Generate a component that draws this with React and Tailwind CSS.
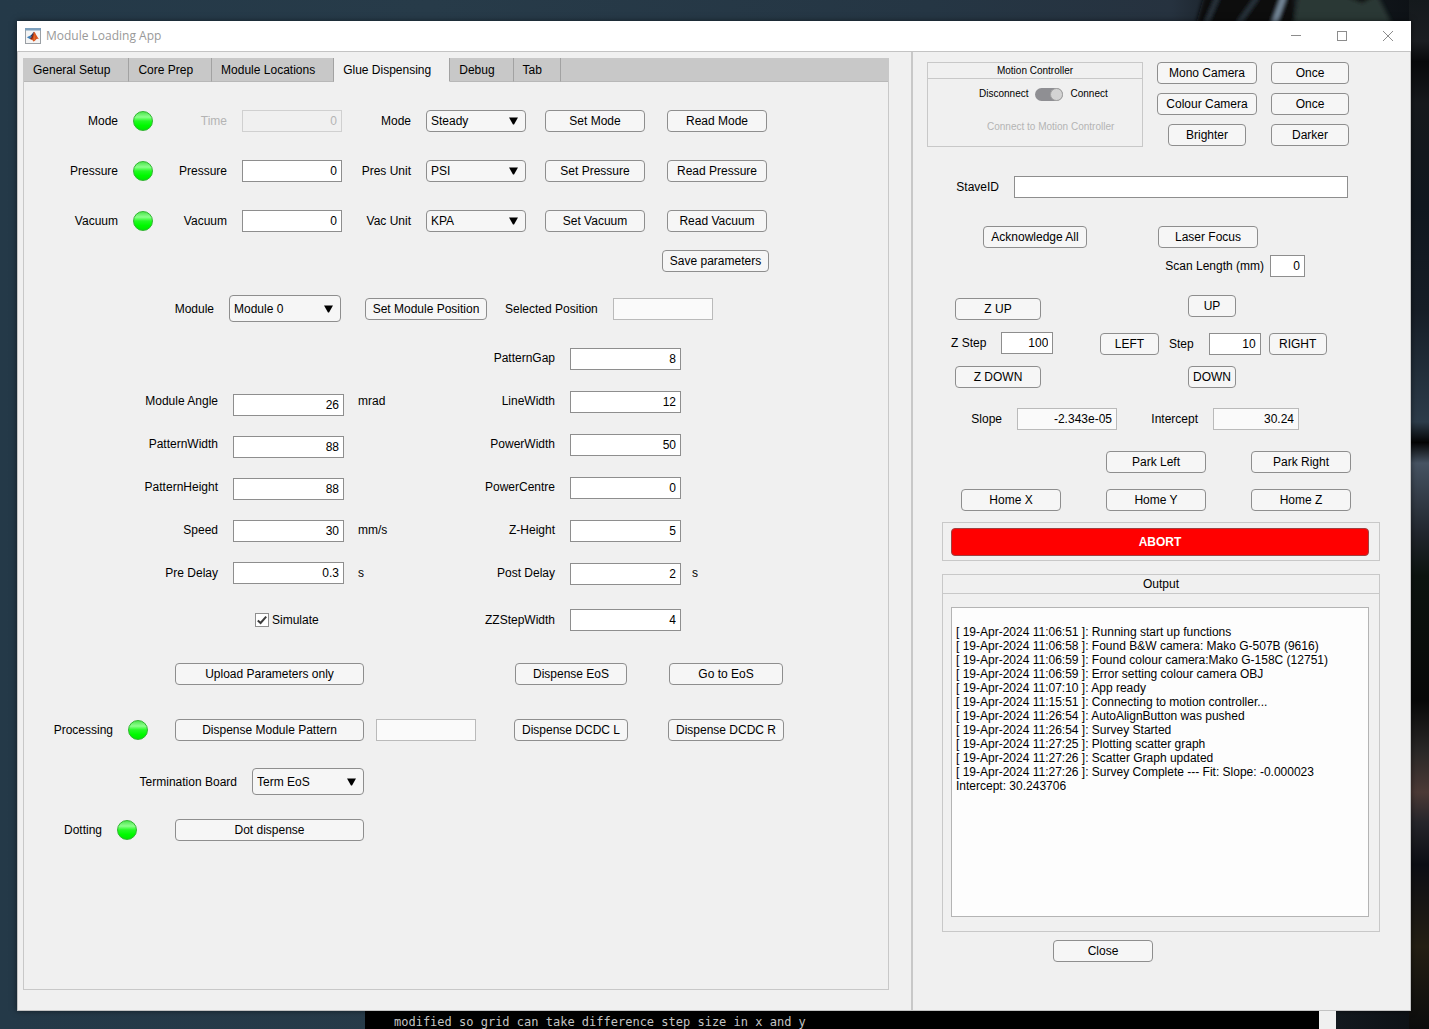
import { useId, useState } from "react";

const tabs = [
  "General Setup",
  "Core Prep",
  "Module Locations",
  "Glue Dispensing",
  "Debug",
  "Tab",
];

const dispenserRows = [
  {
    name: "Mode",
    field: { label: "Time", disabled: true },
    unit: { label: "Mode", options: ["Steady", "Timed"] },
  },
  {
    name: "Pressure",
    field: { label: "Pressure" },
    unit: { label: "Pres Unit", options: ["PSI", "BAR", "KPA"] },
  },
  {
    name: "Vacuum",
    field: { label: "Vacuum" },
    unit: { label: "Vac Unit", options: ["KPA", "PSI", "BAR"] },
  },
];

const patternFields = [
  { id: "angle", label: "Module Angle", value: "26", unit: "mrad" },
  { id: "width", label: "PatternWidth", value: "88" },
  { id: "height", label: "PatternHeight", value: "88" },
  { id: "speed", label: "Speed", value: "30", unit: "mm/s" },
  { id: "pre-delay", label: "Pre Delay", value: "0.3", unit: "s" },
];

const lineFields = [
  { id: "gap", label: "PatternGap", value: "8" },
  { id: "line-width", label: "LineWidth", value: "12" },
  { id: "power-width", label: "PowerWidth", value: "50" },
  { id: "power-centre", label: "PowerCentre", value: "0" },
  { id: "z-height", label: "Z-Height", value: "5" },
  { id: "post-delay", label: "Post Delay", value: "2", unit: "s" },
];

const log = `
[ 19-Apr-2024 11:06:51 ]: Running start up functions
[ 19-Apr-2024 11:06:58 ]: Found B&W camera: Mako G-507B (9616)
[ 19-Apr-2024 11:06:59 ]: Found colour camera:Mako G-158C (12751)
[ 19-Apr-2024 11:06:59 ]: Error setting colour camera OBJ
[ 19-Apr-2024 11:07:10 ]: App ready
[ 19-Apr-2024 11:15:51 ]: Connecting to motion controller...
[ 19-Apr-2024 11:26:54 ]: AutoAlignButton was pushed
[ 19-Apr-2024 11:26:54 ]: Survey Started
[ 19-Apr-2024 11:27:25 ]: Plotting scatter graph
[ 19-Apr-2024 11:27:26 ]: Scatter Graph updated
[ 19-Apr-2024 11:27:26 ]: Survey Complete --- Fit: Slope: -0.000023
Intercept: 30.243706`;

const Button = ({ className = "w-[100px]", children }) => (
  <button
    type="button"
    className={`h-[22px] shrink-0 rounded border border-[#8e8e8e] bg-[#f6f6f6] text-center leading-5 whitespace-nowrap hover:bg-white ${className}`}
  >
    {children}
  </button>
);

const Field = ({ className = "w-[100px]", readOnly, ...props }) => (
  <input
    type="text"
    readOnly={readOnly}
    className={`h-[22px] shrink-0 border px-1 text-right disabled:border-[#d0d0d0] disabled:bg-transparent disabled:text-[#b4b4b4] ${
      readOnly ? "border-[#bababa] bg-[#fafafa]" : "border-[#8e8e8e] bg-white"
    } ${className}`}
    {...props}
  />
);

const Select = ({ id, options, className = "h-[22px] w-[100px]" }) => (
  <span className={`relative block shrink-0 ${className}`}>
    <select
      id={id}
      className="size-full appearance-none rounded border border-[#8e8e8e] bg-[#f6f6f6] pl-1"
    >
      {options.map((option) => (
        <option key={option}>{option}</option>
      ))}
    </select>
    <svg
      viewBox="0 0 9 8"
      className="absolute inset-y-0 right-2 my-auto h-2 w-[9px] pointer-events-none"
    >
      <path d="M0 .5h9L5 7.500H4z" fill="#000" />
    </svg>
  </span>
);

const Led = () => (
  <span className="block rounded-full border size-5 shrink-0 border-[#2fb52f] bg-[linear-gradient(#4fe64f,#8dff8d_28%,#22fb22_50%,#00fa00_75%,#00e800)]" />
);

const DispenserRow = ({ name, field, unit }) => {
  const id = useId();
  return (
    <>
      <span className="text-right">{name}</span>
      <Led />
      <label
        htmlFor={`${id}-value`}
        className={`text-right ${field.disabled ? "text-[#b4b4b4]" : ""}`}
      >
        {field.label}
      </label>
      <Field id={`${id}-value`} defaultValue="0" disabled={field.disabled} />
      <label htmlFor={`${id}-unit`} className="text-right whitespace-nowrap">
        {unit.label}
      </label>
      <Select id={`${id}-unit`} options={unit.options} />
      <Button className="w-[100px] justify-self-end">Set {name}</Button>
      <Button className="w-[100px] justify-self-end">Read {name}</Button>
    </>
  );
};

// Labels and units run on a slightly wider pitch than the boxes between them.
const FieldColumns = ({ fields, labelWidth, pitch, unitGap, className }) => (
  <div className={`flex ${className}`}>
    <div className={`flex flex-col gap-[21px] text-right ${labelWidth}`}>
      {fields.map(({ id, label }) => (
        <label key={id} htmlFor={id} className="h-[22px] leading-[22px]">
          {label}
        </label>
      ))}
    </div>
    <div className={`flex flex-col ml-[15px] ${pitch}`}>
      {fields.map(({ id, value }) => (
        <Field key={id} id={id} defaultValue={value} className="w-[111px]" />
      ))}
    </div>
    <div className={`flex flex-col gap-[21px] w-10 ${unitGap}`}>
      {fields.map(({ id, unit }) => (
        <span key={id} className="h-[22px] leading-[22px]">
          {unit}
        </span>
      ))}
    </div>
  </div>
);

const GlueDispensing = () => (
  <div className="flex flex-col flex-1 pt-7 pb-8">
    <div className="grid grid-cols-[94px_20px_59px_100px_54px_100px_104px_107px] gap-x-[15px] gap-y-7 items-center">
      {dispenserRows.map((row) => (
        <DispenserRow key={row.name} {...row} />
      ))}
    </div>
    <div className="flex mt-[18px] pl-[638px]">
      <Button className="w-[107px]">Save parameters</Button>
    </div>

    <div className="flex items-center mt-[23px]">
      <label htmlFor="module" className="w-[190px] text-right">
        Module
      </label>
      <Select
        id="module"
        options={["Module 0", "Module 1", "Module 2"]}
        className="ml-[15px] h-[27px] w-28"
      />
      <Button className="ml-6 w-[122px]">Set Module Position</Button>
      <label htmlFor="selected-position" className="ml-[18px]">
        Selected Position
      </label>
      <Field
        id="selected-position"
        readOnly
        className="ml-[15px] w-[100px]"
      />
    </div>

    <div className="flex items-start mt-[25px]">
      <FieldColumns
        fields={patternFields}
        labelWidth="w-[194px]"
        pitch="gap-5 pt-1"
        unitGap="ml-[14px]"
        className="pt-[43px]"
      />
      <FieldColumns
        fields={lineFields}
        labelWidth="w-[157px]"
        pitch="gap-[21px] pt-px"
        unitGap="ml-[11px]"
        className=""
      />
    </div>

    <div className="flex items-center mt-6 pl-[231px]">
      <label className="flex items-center gap-[3px] w-[143px]">
        <span className="relative block size-[14px]">
          <input
            type="checkbox"
            defaultChecked
            className="block bg-white border appearance-none peer size-[14px] border-[#8e8e8e]"
          />
          <svg
            viewBox="0 0 14 14"
            className="hidden absolute inset-0 pointer-events-none peer-checked:block"
          >
            <path
              d="M2.800 7.400l2.800 2.600L11.200 3.600"
              fill="none"
              stroke="#3c3c3c"
              strokeWidth="2"
            />
          </svg>
        </span>
        Simulate
      </label>
      <label htmlFor="zz-step" className="w-[157px] text-right">
        ZZStepWidth
      </label>
      <Field id="zz-step" defaultValue="4" className="ml-[15px] w-[111px]" />
    </div>

    <div className="flex mt-8 pl-[151px]">
      <Button className="w-[189px]">Upload Parameters only</Button>
      <Button className="ml-[151px] w-28">Dispense EoS</Button>
      <Button className="ml-[42px] w-[114px]">Go to EoS</Button>
    </div>

    <div className="flex items-center mt-[34px]">
      <span className="w-[89px] text-right mr-[15px]">Processing</span>
      <Led />
      <Button className="ml-[27px] w-[189px]">Dispense Module Pattern</Button>
      <Field
        readOnly
        aria-label="Pattern status"
        className="ml-3 w-[100px]"
      />
      <Button className="ml-[38px] w-[114px]">Dispense DCDC L</Button>
      <Button className="ml-10 w-[116px]">Dispense DCDC R</Button>
    </div>

    <div className="flex items-center mt-[27px]">
      <label htmlFor="termination" className="w-[213px] text-right">
        Termination Board
      </label>
      <Select
        id="termination"
        options={["Term EoS", "Term DCDC"]}
        className="ml-[15px] h-[27px] w-28"
      />
    </div>

    <div className="flex items-center mt-6">
      <span className="w-[78px] text-right mr-[15px]">Dotting</span>
      <Led />
      <Button className="ml-[38px] w-[189px]">Dot dispense</Button>
    </div>
  </div>
);

const MotionController = () => (
  <fieldset
    aria-label="Motion Controller"
    className="flex flex-col border w-[216px] h-[85px] border-[#c8c8c8] text-[10px]"
  >
    <div className="h-4 leading-4 text-center border-b border-[#c8c8c8]">
      Motion Controller
    </div>
    <div className="flex gap-[7px] items-center mt-2 h-[14px] pl-[51px]">
      <span>Disconnect</span>
      <input
        type="checkbox"
        role="switch"
        aria-label="Connect"
        defaultChecked
        className="flex w-7 appearance-none h-[13px] rounded-full bg-[#8f8f93] before:block before:size-[13px] before:rounded-full before:border before:border-[#a2a2a2] before:bg-[#d3d3d3] checked:before:ml-auto"
      />
      <span>Connect</span>
    </div>
    <div className="mt-[19px] leading-[14px] pl-[59px] text-[#b4b4b4]">
      Connect to Motion Controller
    </div>
  </fieldset>
);

const StagePanel = () => (
  <section className="flex flex-col pt-[10px] pb-12 shrink-0 w-[497px]">
    <div className="flex gap-[14px] pl-[14px]">
      <MotionController />
      <div className="grid grid-cols-[100px_78px] gap-x-[14px] gap-y-[9px] content-start justify-items-center">
        <Button>Mono Camera</Button>
        <Button className="w-[78px]">Once</Button>
        <Button>Colour Camera</Button>
        <Button className="w-[78px]">Once</Button>
        <Button className="w-[78px]">Brighter</Button>
        <Button className="w-[78px]">Darker</Button>
      </div>
    </div>

    <div className="flex items-center mt-[29px] pr-[62px]">
      <label htmlFor="stave" className="w-[86px] text-right">
        StaveID
      </label>
      <Field id="stave" className="flex-1 ml-[15px]" />
    </div>

    <div className="flex mt-7 pl-[70px]">
      <Button className="w-[104px]">Acknowledge All</Button>
      <Button className="ml-[71px] w-[100px]">Laser Focus</Button>
    </div>
    <div className="flex items-center mt-[7px]">
      <label htmlFor="scan-length" className="w-[351px] text-right">
        Scan Length (mm)
      </label>
      <Field id="scan-length" defaultValue="0" className="ml-[6px] w-[35px]" />
    </div>

    <div className="flex items-end mt-[18px] pl-[38px]">
      <div className="flex flex-col gap-3 w-[149px]">
        <Button className="ml-1 w-[86px]">Z UP</Button>
        <div className="flex gap-[15px] items-center">
          <label htmlFor="z-step">Z Step</label>
          <Field id="z-step" defaultValue="100" className="w-[52px]" />
        </div>
        <Button className="ml-1 w-[86px]">Z DOWN</Button>
      </div>
      <div className="flex flex-col">
        <Button className="mb-4 ml-[88px] w-12">UP</Button>
        <div className="flex items-center">
          <Button className="w-[59px]">LEFT</Button>
          <label htmlFor="xy-step" className="ml-[10px]">
            Step
          </label>
          <Field
            id="xy-step"
            defaultValue="10"
            className="ml-[15px] w-[52px]"
          />
          <Button className="ml-2 w-[58px]">RIGHT</Button>
        </div>
        <Button className="mt-[11px] ml-[88px] w-12">DOWN</Button>
      </div>
    </div>

    <div className="flex items-center mt-5">
      <label htmlFor="slope" className="w-[89px] text-right">
        Slope
      </label>
      <Field
        id="slope"
        readOnly
        value="-2.343e-05"
        className="ml-[15px] w-[100px]"
      />
      <label htmlFor="intercept" className="w-[81px] text-right">
        Intercept
      </label>
      <Field
        id="intercept"
        readOnly
        value="30.24"
        className="ml-[15px] w-[86px]"
      />
    </div>

    <div className="grid grid-cols-[100px_100px_100px] gap-x-[45px] gap-y-4 mt-[21px] pl-12">
      <Button className="col-start-2">Park Left</Button>
      <Button className="col-start-3">Park Right</Button>
      <Button>Home X</Button>
      <Button>Home Y</Button>
      <Button>Home Z</Button>
    </div>

    <div className="flex pt-[5px] pr-[10px] pb-1 pl-2 mt-[11px] mr-[30px] ml-[29px] border border-[#c8c8c8]">
      <button
        type="button"
        className="flex-1 h-7 font-bold text-white bg-[#ff0000] rounded border border-[#a04040]"
      >
        ABORT
      </button>
    </div>

    <div className="flex flex-col mt-[13px] mr-[30px] ml-[29px] border border-[#c8c8c8]">
      <label
        htmlFor="output"
        className="h-[19px] leading-[18px] text-center border-b border-[#c8c8c8]"
      >
        Output
      </label>
      <textarea
        id="output"
        readOnly
        value={log}
        className="block h-[310px] mr-[10px] ml-2 mt-[13px] mb-[14px] resize-none border border-[#b4b4b4] bg-[#fdfdfd] px-1 pt-[3px] leading-[14px]"
      />
    </div>

    <div className="flex mt-2 pl-[140px]">
      <Button>Close</Button>
    </div>
  </section>
);

const AppIcon = () => (
  <svg viewBox="0 0 16 16" className="size-4">
    <rect x=".5" y=".5" width="15" height="15" fill="#f4f4f4" stroke="#9a9fa4" />
    <path d="M0 0h16v2.5H0z" fill="#7da0bd" />
    <path d="M1.8 9.2L5.4 7.4 7 9.4 4.8 11z" fill="#3d7fb8" />
    <path d="M5.4 7.4C7 6.8 7.6 4.6 9 3.8L7.6 9.2 7 9.4z" fill="#1f3f6e" />
    <path
      d="M9 3.8c1.2 0 2.4 4.6 5.2 7.4-1.6-.8-2.6-.4-3.6.8-.8 1-1.6 1.4-2.2 1.6C7.8 12 6.4 11 4.8 11 7 9.8 8 7 9 3.8z"
      fill="#d9541e"
    />
    <path d="M9 3.8c-.4 3-.8 6-2 7.8L4.8 11C7 9.8 8 7 9 3.8z" fill="#7c2415" />
    <path d="M9.3 5c.4 3 .2 5-.4 7.6.8-1 1.3-2.6.4-7.6z" fill="#f6a13a" />
  </svg>
);

const TitleBar = () => (
  <header className="flex items-center pl-2 h-[30px] bg-white">
    <AppIcon />
    <h1 className="flex-1 pl-[5px] font-['Open_Sans',sans-serif] text-[#999]">
      Module Loading App
    </h1>
    <button type="button" aria-label="Minimize" className="px-[18px]">
      <svg viewBox="0 0 10 10" className="size-[10px]" stroke="#8c8c8c">
        <path d="M0 4.5h10" />
      </svg>
    </button>
    <button type="button" aria-label="Maximize" className="px-[18px]">
      <svg viewBox="0 0 10 10" className="size-[10px]" stroke="#8c8c8c">
        <rect x=".5" y=".5" width="9" height="9" fill="none" />
      </svg>
    </button>
    <button type="button" aria-label="Close window" className="px-[18px]">
      <svg viewBox="0 0 10 10" className="size-[10px]" stroke="#8c8c8c">
        <path d="M0 0l10 10M10 0L0 10" />
      </svg>
    </button>
  </header>
);

const Wallpaper = () => (
  <svg
    viewBox="0 0 1429 1029"
    preserveAspectRatio="none"
    className="absolute inset-0 -z-10 size-full"
  >
    <defs>
      <linearGradient id="sky">
        <stop offset="0" stopColor="#243948" />
        <stop offset=".3" stopColor="#273b49" />
        <stop offset=".65" stopColor="#253644" />
        <stop offset=".82" stopColor="#26323f" />
        <stop offset=".85" stopColor="#1c242c" />
        <stop offset="1" stopColor="#0c1014" />
      </linearGradient>
      <linearGradient id="edge" x2="0" y2="1">
        <stop offset="0" stopColor="#14191c" />
        <stop offset=".04" stopColor="#1b1e22" />
        <stop offset=".06" stopColor="#08090b" />
        <stop offset=".1" stopColor="#16191c" />
        <stop offset=".2" stopColor="#10171e" />
        <stop offset=".3" stopColor="#161d26" />
        <stop offset=".41" stopColor="#2c3c4a" />
        <stop offset=".43" stopColor="#040404" />
        <stop offset=".45" stopColor="#465362" />
        <stop offset=".52" stopColor="#20252c" />
        <stop offset=".56" stopColor="#0c140f" />
        <stop offset=".68" stopColor="#070808" />
        <stop offset=".73" stopColor="#2a2827" />
        <stop offset=".77" stopColor="#4c3a36" />
        <stop offset=".8" stopColor="#25252a" />
        <stop offset=".84" stopColor="#0c0e14" />
        <stop offset=".92" stopColor="#241f14" />
        <stop offset="1" stopColor="#0b0c0c" />
      </linearGradient>
      <filter id="soft">
        <feGaussianBlur stdDeviation="2" />
      </filter>
    </defs>
    <rect width="1429" height="1029" fill="url(#sky)" />
    <g filter="url(#soft)">
      <path d="M1204-4h90v28h-98z" fill="#0b0d11" />
      <path d="M1218-4l-12 28M1258-4l-20 28" stroke="#34424d" strokeWidth="3" />
      <path d="M1284-4l-10 28" stroke="#8aa0b4" strokeWidth="4" />
      <path d="M1298-4h80l14 28h-98z" fill="#2c3936" />
      <path d="M1336-8h46l-20 11z" fill="#0a0c0d" />
    </g>
    <rect x="1409" width="20" height="1029" fill="url(#edge)" />
  </svg>
);

export default function App() {
  const [active, setActive] = useState("Glue Dispensing");

  return (
    <div className="flex relative isolate flex-col min-h-screen pt-[21px] font-['Liberation_Sans',Arial,sans-serif] text-xs text-black">
      <Wallpaper />
      <div className="flex flex-col flex-1 mr-[18px] ml-[17px] bg-[#f0f0f0] shadow-[0_0_6px_rgba(0,0,0,0.5)]">
        <TitleBar />
        <main className="flex flex-1 border border-[#c3c3c3]">
          <section className="flex flex-col flex-1 pt-[6px] pr-[22px] pb-5 pl-[5px]">
            <div className="flex flex-col flex-1 border border-t-0 border-[#c8c8c8]">
              <div role="tablist" className="flex h-6 bg-[#c8c8c8]">
                {tabs.map((tab) => (
                  <button
                    key={tab}
                    type="button"
                    role="tab"
                    aria-selected={active === tab}
                    onClick={() => setActive(tab)}
                    className="pr-[18px] pl-[9px] whitespace-nowrap border-r border-b border-r-[#a2a2a2] border-b-[#b8b8b8] aria-selected:border-b-[#f0f0f0] aria-selected:bg-[#f0f0f0]"
                  >
                    {tab}
                  </button>
                ))}
                <div className="flex-1 border-b border-[#b8b8b8]" />
              </div>
              <GlueDispensing />
            </div>
          </section>
          <div className="w-[2px] bg-[#c8c8c8]" />
          <StagePanel />
        </main>
      </div>

      <footer className="flex h-[18px] pl-[365px]">
        <p className="pt-1 whitespace-pre bg-black pl-[29px] w-[954px] font-['DejaVu_Sans_Mono',monospace] leading-[14px] text-[#c4c4c4]">
          modified so grid can take difference step size in x and y
        </p>
        <div className="bg-[#f0f0f0] w-[17px]" />
      </footer>
    </div>
  );
}
